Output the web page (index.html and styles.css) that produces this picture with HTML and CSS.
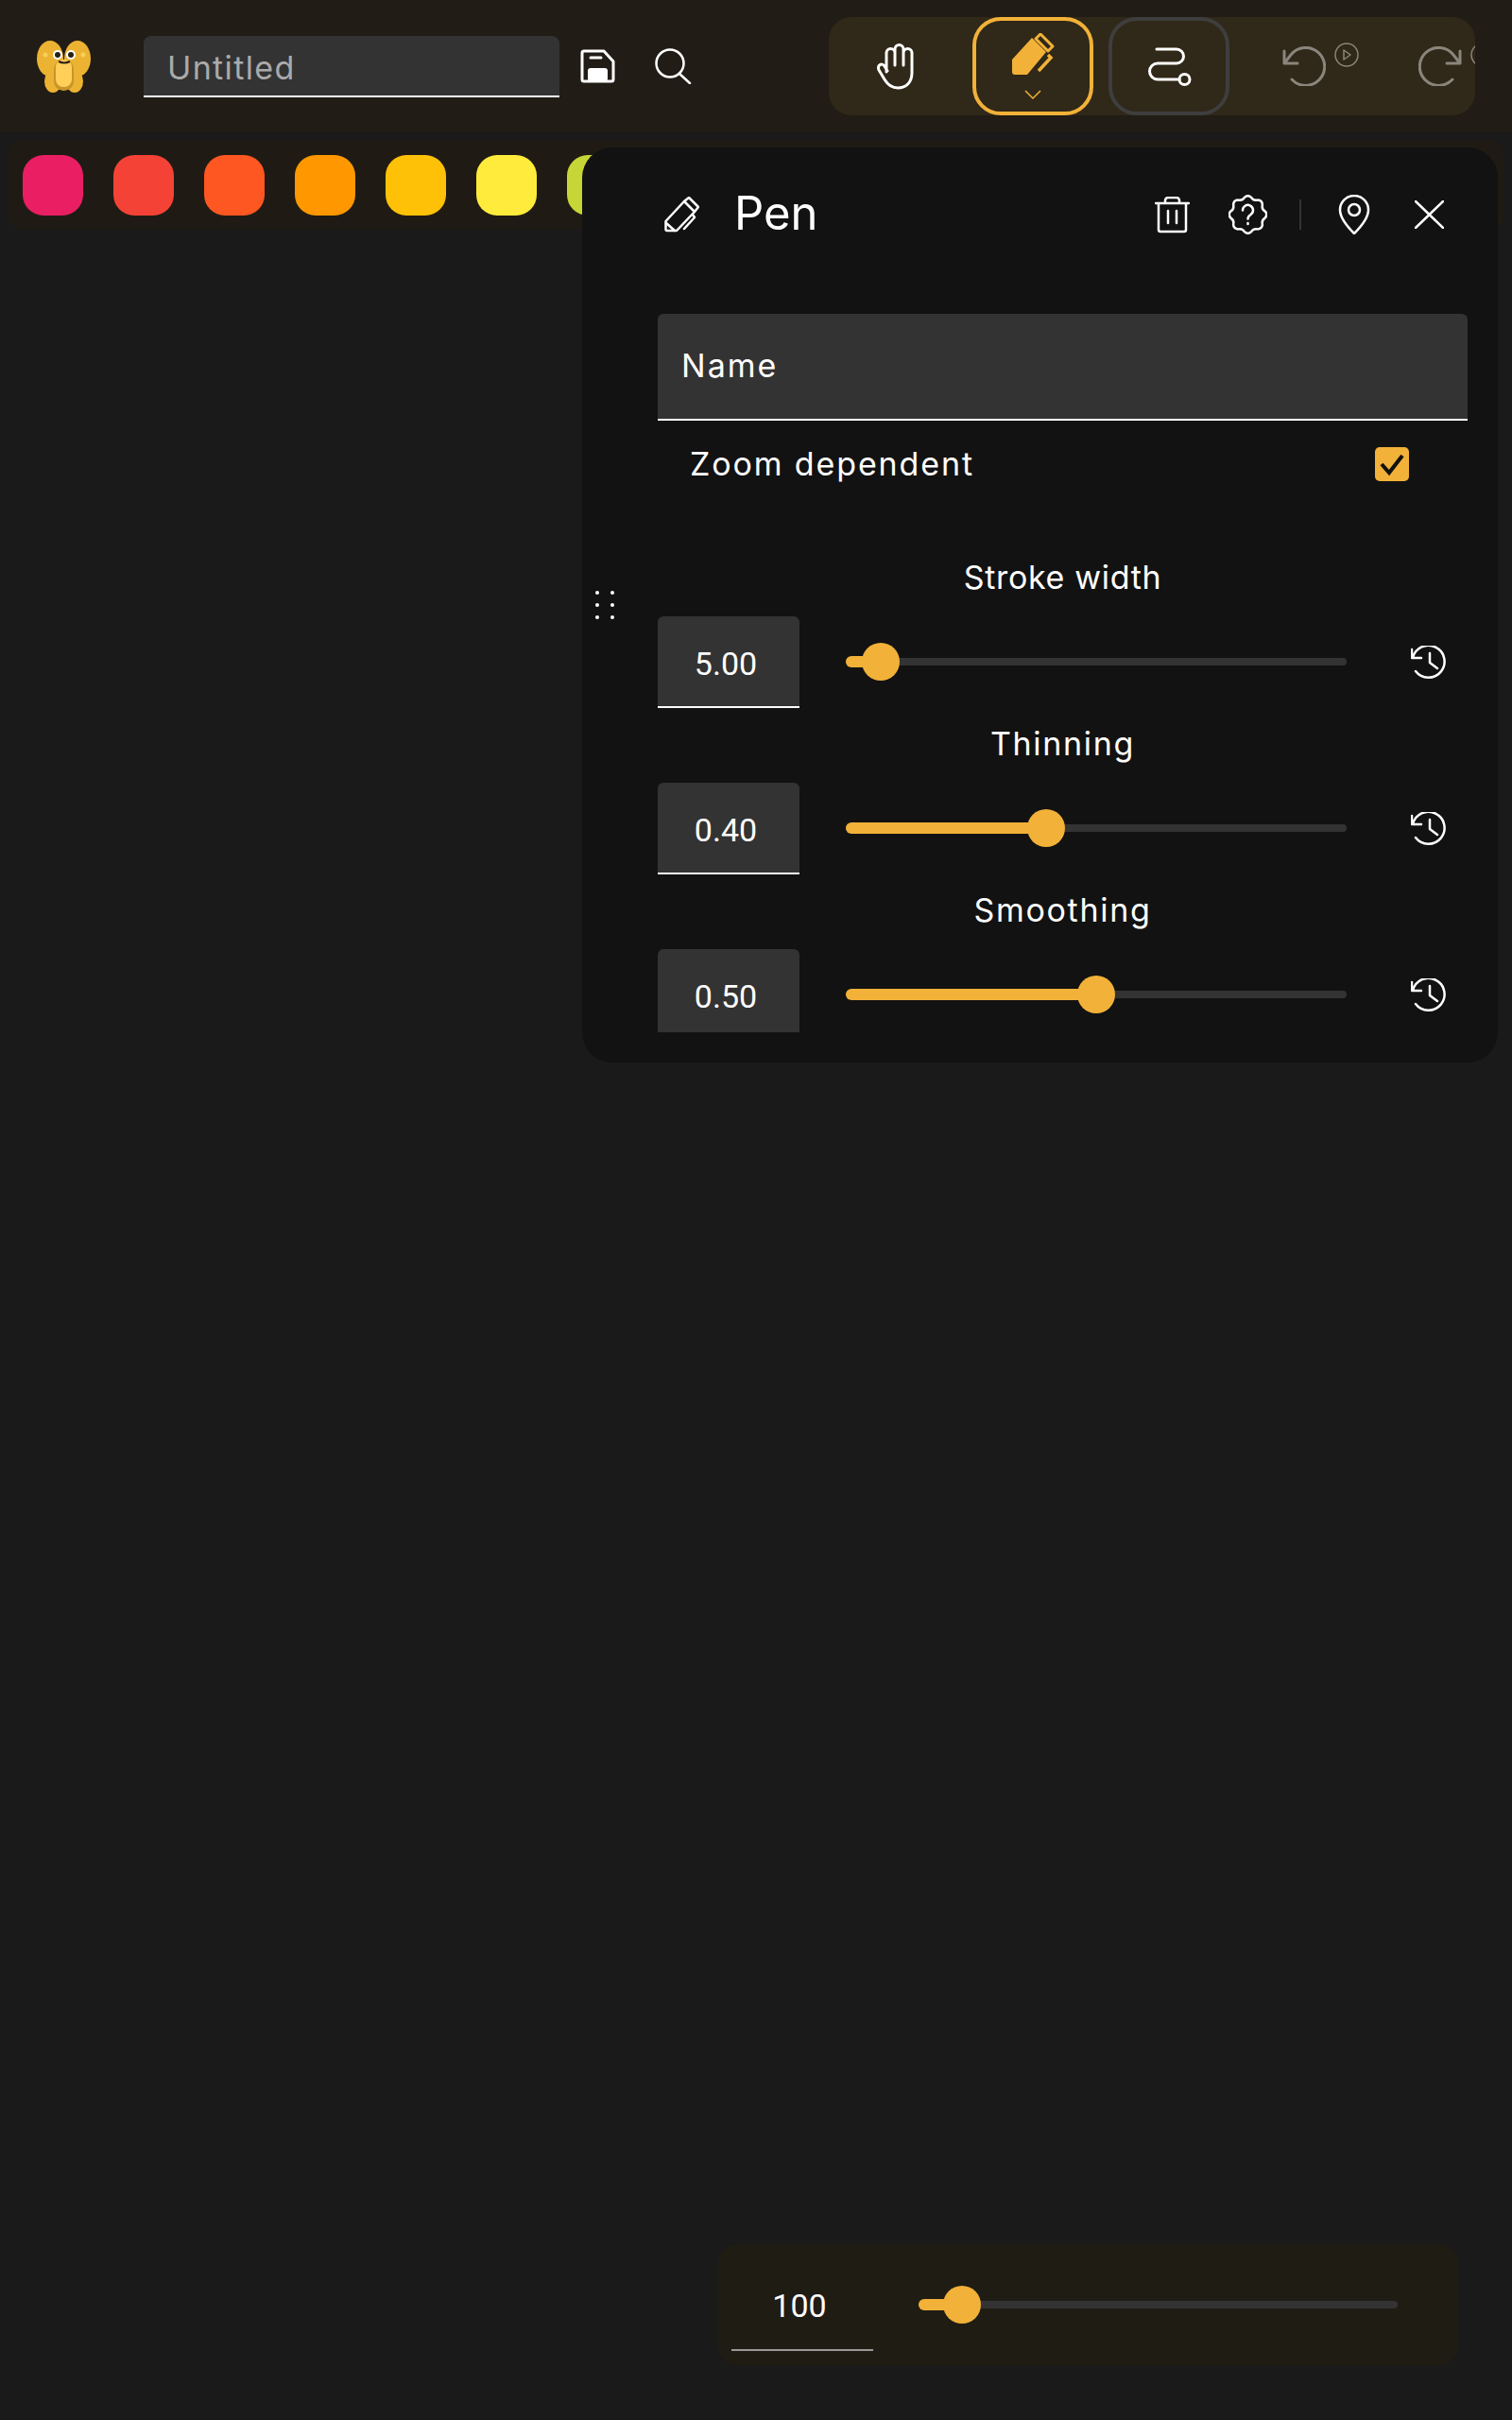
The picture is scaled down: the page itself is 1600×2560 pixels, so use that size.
FILE: index.html
```html
<!DOCTYPE html>
<html lang="en">
<head>
  <meta charset="UTF-8">
  <title>Untitled</title>
  <link rel="stylesheet" href="styles.css">
</head>
<body>
  <header class="topbar">
    <svg class="logo" width="57" height="55" viewBox="0 0 57 55">
      <ellipse cx="17" cy="43" rx="9" ry="12" fill="#ecb332"/>
      <ellipse cx="40" cy="43" rx="9" ry="12" fill="#ecb332"/>
      <ellipse cx="14" cy="19" rx="14" ry="19" fill="#ecb332"/>
      <ellipse cx="43" cy="19" rx="14" ry="19" fill="#ecb332"/>
      <rect x="18" y="20" width="21" height="33" rx="10" fill="#c9952a"/>
      <rect x="20" y="20" width="17" height="29" rx="8" fill="#ffcf58"/>
      <circle cx="9" cy="15" r="2.5" fill="#f9cf58"/>
      <circle cx="49" cy="15" r="2.5" fill="#f9cf58"/>
      <circle cx="22" cy="15" r="5" fill="#fff"/>
      <circle cx="36" cy="15" r="5" fill="#fff"/>
      <circle cx="22" cy="15" r="3" fill="#2a2114"/>
      <circle cx="36" cy="15" r="3" fill="#2a2114"/>
      <path d="M23 22q6 3 12 0" fill="none" stroke="#2a2114" stroke-width="2"/>
    </svg>
    <div class="title-field">Untitled</div>
    <svg class="save-icon icon" width="37" height="36" viewBox="0 0 37 36">
      <path d="M2 4a2 2 0 0 1 2-2h21l10 11v19a2 2 0 0 1-2 2H4a2 2 0 0 1-2-2Z"/>
      <path d="M11 9h11"/>
      <rect class="solid" x="8" y="20" width="21" height="14" rx="3"/>
    </svg>
    <svg class="search-icon icon thin" width="39" height="38" viewBox="0 0 39 38">
      <circle cx="16" cy="16" r="14.5"/>
      <path d="M26 27l11 10"/>
    </svg>

    <nav class="toolbar">
      <div class="tool tool-hand">
        <svg class="icon" width="42" height="49" viewBox="0 0 42 49">
          <path d="M11 30V10a4.500 4.500 0 0 1 9 0v13M20 23V6a4.500 4.500 0 0 1 9 0v17M29 23V10a4.500 4.500 0 0 1 9 0v21c0 10-6 16-15 16-7 0-11-4-14-9l-6-10c-2-5 3-8 6-4l3 5"/>
        </svg>
      </div>
      <div class="tool tool-active">
        <svg width="45" height="45" viewBox="0 0 45 45" fill="#f2b138">
          <path d="M0 28L21 5l15 15-20 24H3a3 3 0 0 1-3-3Z"/>
          <path d="M25 6l5-5 13 13-5 5Z" fill="none" stroke="#f2b138" stroke-width="3" stroke-linejoin="round"/>
          <path d="M38 23l3 3-13 14" fill="none" stroke="#f2b138" stroke-width="3.500"/>
        </svg>
        <svg class="chevron" width="18" height="10" viewBox="0 0 18 10">
          <path d="M1 1l8 8 8-8" fill="none" stroke="#f2b138" stroke-width="1.500"/>
        </svg>
      </div>
      <div class="tool tool-outline">
        <svg class="icon" width="47" height="41" viewBox="0 0 47 41">
          <path d="M10 2h21a7 7 0 0 1 0 15H11a8.500 8.500 0 0 0 0 17h23"/>
          <circle cx="39.500" cy="34" r="5.500"/>
        </svg>
      </div>
      <div class="tool tool-muted">
        <svg class="icon" width="46" height="42" viewBox="0 0 46 42">
          <path d="M2 5v13h14M2 18l7-9a20 20 0 1 1 1 26"/>
        </svg>
        <svg class="icon mini-play" width="26" height="26" viewBox="0 0 26 26">
          <circle cx="13" cy="13" r="12"/>
          <path d="M10 8l7 5-7 5Z"/>
        </svg>
      </div>
      <div class="tool tool-muted">
        <svg class="icon" width="46" height="42" viewBox="0 0 46 42">
          <path d="M44 5v13H30M44 18l-7-9a20 20 0 1 0-1 26"/>
        </svg>
        <svg class="icon mini-play" width="26" height="26" viewBox="0 0 26 26">
          <circle cx="13" cy="13" r="12"/>
          <path d="M10 8l7 5-7 5Z"/>
        </svg>
      </div>
    </nav>
  </header>

  <div class="palette">
    <span class="swatch" style="background:#e91e63"></span>
    <span class="swatch" style="background:#f44336"></span>
    <span class="swatch" style="background:#ff5722"></span>
    <span class="swatch" style="background:#ff9800"></span>
    <span class="swatch" style="background:#ffc107"></span>
    <span class="swatch" style="background:#ffeb3b"></span>
    <span class="swatch" style="background:#c6d636"></span>
  </div>

  <section class="panel">
    <div class="drag-handle">
      <i></i><i></i><i></i><i></i><i></i><i></i>
    </div>
    <div class="panel-head">
      <svg class="icon thin pen-icon" width="37" height="38" viewBox="0 0 37 38">
        <path d="M1.500 26L21 5l11 11-19 20H3a1.500 1.500 0 0 1-1.500-1.500Z"/>
        <path d="M21 5l5-4 10 10-4 5M2 28l9 8M30 19l2 3-11 12"/>
      </svg>
      <h1 class="panel-title">Pen</h1>
      <div class="panel-actions">
        <svg class="icon thin" width="37" height="39" viewBox="0 0 37 39">
          <path d="M1 7h35M11 7V4a3 3 0 0 1 3-3h9a3 3 0 0 1 3 3v3M4 7v28a2 2 0 0 0 2 2h25a2 2 0 0 0 2-2V7M14 15v13M23 15v13"/>
        </svg>
        <svg class="icon thin act-help" width="41" height="42" viewBox="0 0 41 42">
          <path d="M16.900 2.900Q20.500-.5 24.100 2.900Q26.400 6.700 30.800 5.600Q35.700 5.800 35.900 10.700Q34.800 15.100 38.600 17.400Q42 21 38.600 24.600Q34.800 26.900 35.900 31.300Q35.700 36.200 30.800 36.400Q26.400 35.300 24.100 39.100Q20.500 42.500 16.900 39.100Q14.600 35.300 10.200 36.400Q5.300 36.200 5.100 31.300Q6.200 26.900 2.400 24.600Q-1 21 2.400 17.400Q6.200 15.100 5.100 10.700Q5.300 5.800 10.200 5.600Q14.600 6.700 16.900 2.900Z"/>
          <path d="M15 16.500a5.500 5.500 0 1 1 8.500 4.500c-2 1.300-3 2-3 4.500M20.500 30v1"/>
        </svg>
        <span class="act-divider"></span>
        <svg class="icon thin act-pin" width="34" height="42" viewBox="0 0 34 42">
          <path d="M17 41C8 32 2 24 2 16a15 15 0 0 1 30 0c0 8-6 16-15 25Z"/>
          <circle cx="17" cy="16" r="6"/>
        </svg>
        <svg class="icon thin act-close" width="31" height="30" viewBox="0 0 31 30">
          <path d="M1 1l29 28M30 1L1 29"/>
        </svg>
      </div>
    </div>

    <div class="panel-body">
      <div class="name-field">Name</div>
      <div class="check-row">
        <span>Zoom dependent</span>
        <svg class="check-box" width="36" height="36" viewBox="0 0 36 36">
          <rect width="36" height="36" rx="5" fill="#f2b138"/>
          <path d="M7 18l8 9 14-18" fill="none" stroke="#111" stroke-width="4"/>
        </svg>
      </div>

      <div class="setting">
        <div class="setting-label setting-label-tight">Stroke width</div>
        <div class="setting-row">
          <div class="num-box">5.00</div>
          <div class="slider"><div class="track"><div class="fill" style="width:7%"></div><div class="thumb" style="left:7%"></div></div></div>
          <svg class="icon thin history" width="38" height="36" viewBox="0 0 38 36">
            <path d="M1 4v9h10M2 13A17 17 0 1 1 5 27M20 8v10l8 6"/>
          </svg>
        </div>
      </div>

      <div class="setting">
        <div class="setting-label">Thinning</div>
        <div class="setting-row">
          <div class="num-box">0.40</div>
          <div class="slider"><div class="track"><div class="fill" style="width:40%"></div><div class="thumb" style="left:40%"></div></div></div>
          <svg class="icon thin history" width="38" height="36" viewBox="0 0 38 36">
            <path d="M1 4v9h10M2 13A17 17 0 1 1 5 27M20 8v10l8 6"/>
          </svg>
        </div>
      </div>

      <div class="setting">
        <div class="setting-label">Smoothing</div>
        <div class="setting-row">
          <div class="num-box">0.50</div>
          <div class="slider"><div class="track"><div class="fill" style="width:50%"></div><div class="thumb" style="left:50%"></div></div></div>
          <svg class="icon thin history" width="38" height="36" viewBox="0 0 38 36">
            <path d="M1 4v9h10M2 13A17 17 0 1 1 5 27M20 8v10l8 6"/>
          </svg>
        </div>
      </div>
    </div>
  </section>

  <div class="zoom-bar">
    <div class="zoom-value">100</div>
    <div class="slider zoom-slider"><div class="track"><div class="fill" style="width:9%"></div><div class="thumb" style="left:9%"></div></div></div>
  </div>
</body>
</html>
```

FILE: styles.css
```css
body {
  margin: 0;
  height: 2560px;
  overflow: hidden;
  background-color: #1a1a1a;
  color: #fff;
  font-family: "Inter", sans-serif;
}

.icon {
  fill: none;
  stroke: #fff;
  stroke-width: 3;
  stroke-linejoin: round;
  stroke-linecap: round;
  flex-shrink: 0;
}

.icon.thin {
  stroke-width: 2.5;
}

.icon .solid {
  fill: #fff;
  stroke: none;
}

/* top bar */
.topbar {
  display: flex;
  align-items: center;
  height: 140px;
  padding-left: 39px;
  background-color: #211c15;
}

.logo {
  flex-shrink: 0;
}

.title-field {
  box-sizing: border-box;
  width: 440px;
  height: 65px;
  margin-left: 56px;
  padding-left: 25px;
  background-color: #333;
  border-bottom: 2px solid #fff;
  border-radius: 8px 8px 0 0;
  color: #aaa;
  font-size: 34px;
  letter-spacing: 0.04em;
  line-height: 67px;
}

.save-icon {
  margin-left: 22px;
}

.search-icon {
  margin-left: 42px;
}

.toolbar {
  display: flex;
  gap: 16px;
  width: 684px;
  height: 104px;
  margin-left: auto;
  margin-right: 39px;
  padding-left: 8px;
  box-sizing: border-box;
  background-color: #302818;
  border-radius: 24px;
  overflow: hidden;
}

.tool {
  position: relative;
  box-sizing: border-box;
  display: flex;
  flex-direction: column;
  align-items: center;
  justify-content: center;
  flex-shrink: 0;
  width: 128px;
  height: 104px;
  border-radius: 30px;
}

.tool-hand {
  padding-right: 3px;
}

.tool-active {
  border: 4px solid #f2b138;
}

.chevron {
  margin-top: 15px;
}

.tool-outline {
  border: 4px solid #3e3e3e;
}

.tool-muted {
  padding-right: 3px;
}

.tool-muted .icon {
  stroke: #8a857c;
}

.mini-play {
  position: absolute;
  top: 27px;
  left: 95px;
  stroke-width: 1.5 !important;
}

/* colour strip */
.palette {
  display: flex;
  gap: 32px;
  height: 95px;
  margin: 8px 8px 0;
  padding: 16px 16px 15px;
  box-sizing: border-box;
  background-color: #1f1b14;
  border-radius: 16px;
}

.swatch {
  width: 64px;
  height: 64px;
  border-radius: 22px;
}

/* pen panel */
.panel {
  position: absolute;
  top: 156px;
  left: 616px;
  box-sizing: border-box;
  width: 969px;
  height: 968px;
  padding: 0 32px 0 80px;
  background-color: #121212;
  border-radius: 32px;
}

.drag-handle {
  position: absolute;
  top: 469px;
  left: 14px;
  display: grid;
  grid-template-columns: 4px 4px;
  gap: 9px 12px;
}

.drag-handle i {
  width: 4px;
  height: 4px;
  border-radius: 50%;
  background-color: #fff;
}

.panel-head {
  display: flex;
  align-items: center;
  height: 142px;
  margin-bottom: 34px;
}

.pen-icon {
  margin-left: 7px;
}

.panel-title {
  margin: 0 0 3px 37px;
  font-size: 49px;
  font-weight: 400;
}

.panel-actions {
  display: flex;
  align-items: center;
  margin-left: auto;
  margin-right: 25px;
}

.act-help {
  margin-left: 41px;
}

.act-divider {
  width: 2px;
  height: 32px;
  margin-left: 34px;
  background-color: #333;
}

.act-pin {
  margin-left: 39px;
}

.act-close {
  margin-left: 47px;
}

.panel-body {
  height: 760px;
  overflow: hidden;
}

.name-field {
  box-sizing: border-box;
  height: 113px;
  padding-left: 25px;
  background-color: #333;
  border-bottom: 2px solid #fff;
  border-radius: 6px 6px 0 0;
  font-size: 34px;
  letter-spacing: 0.06em;
  line-height: 109px;
}

.check-row {
  display: flex;
  align-items: center;
  justify-content: space-between;
  height: 92px;
  margin-bottom: 36px;
  padding: 0 62px 0 34px;
  font-size: 34px;
  letter-spacing: 0.055em;
}

.check-row span {
  margin-bottom: 2px;
}

.setting-label {
  height: 79px;
  font-size: 34px;
  letter-spacing: 0.05em;
  line-height: 75px;
  text-align: center;
}

.setting-label-tight {
  letter-spacing: 0.02em;
}

.setting-row {
  display: flex;
  align-items: center;
}

.num-box {
  box-sizing: border-box;
  flex-shrink: 0;
  width: 150px;
  height: 97px;
  padding-right: 6px;
  background-color: #333;
  border-bottom: 2px solid #fff;
  border-radius: 6px 6px 0 0;
  font-family: "Roboto", sans-serif;
  font-size: 34px;
  line-height: 100px;
  text-align: center;
}

/* sliders */
.slider {
  display: flex;
  align-items: center;
  flex-shrink: 0;
  width: 530px;
  height: 40px;
  margin-left: 49px;
  margin-bottom: 1px;
}

.track {
  position: relative;
  width: 100%;
  height: 8px;
  background-color: #333;
  border-radius: 4px;
}

.fill {
  position: absolute;
  top: -2px;
  left: 0;
  height: 12px;
  background-color: #f2b138;
  border-radius: 6px;
}

.thumb {
  position: absolute;
  top: -16px;
  width: 40px;
  height: 40px;
  margin-left: -20px;
  background-color: #f2b138;
  border-radius: 50%;
}

.history {
  margin-left: 68px;
}

/* bottom zoom control */
.zoom-bar {
  position: absolute;
  top: 2374px;
  left: 760px;
  box-sizing: border-box;
  display: flex;
  align-items: flex-start;
  width: 783px;
  height: 128px;
  padding-left: 14px;
  background-color: #1f1c14;
  border-radius: 20px;
}

.zoom-value {
  box-sizing: border-box;
  flex-shrink: 0;
  width: 150px;
  height: 113px;
  padding-right: 6px;
  border-bottom: 2px solid #999;
  font-family: "Roboto", sans-serif;
  font-size: 34px;
  line-height: 130px;
  text-align: center;
}

.zoom-slider {
  width: 507px;
  margin-left: 48px;
  margin-top: 44px;
}
```
